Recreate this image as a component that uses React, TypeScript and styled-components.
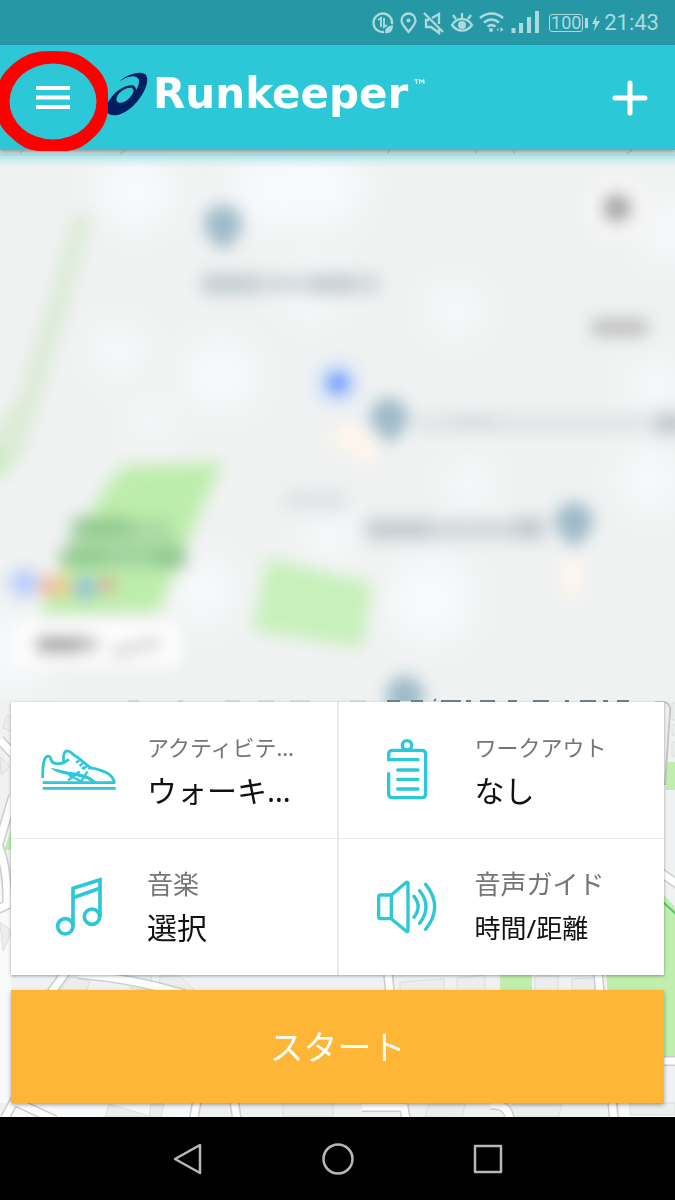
import React from "react";
import styled, { createGlobalStyle } from "styled-components";

const teal = "#2dc8d7";

const GlobalStyle = createGlobalStyle`
  *, *::before, *::after { box-sizing: border-box; }
  body {
    margin: 0;
    background: #000;
    font-family: "Noto Sans", "Noto Sans CJK JP", sans-serif;
  }
  button {
    margin: 0;
    padding: 0;
    border: 0;
    background: none;
    font: inherit;
    color: inherit;
    cursor: pointer;
  }
  svg { display: block; }
`;

const Screen = styled.div`
  display: flex;
  flex-direction: column;
  min-height: 100vh;
  overflow: hidden;
`;

const StatusBar = styled.div`
  display: flex;
  align-items: center;
  justify-content: flex-end;
  gap: 4px;
  height: 45px;
  padding-right: 16px;
  background: #2698a5;
  color: #abdade;
  font-family: Roboto, sans-serif;
`;

const Battery = styled.span`
  display: flex;
  align-items: center;
  justify-content: center;
  width: 34px;
  height: 18px;
  margin-left: 6px;
  border: 1px solid currentColor;
  border-radius: 3px;
  font-size: 18px;
  line-height: 18px;
`;

const BatteryTip = styled.span`
  width: 3px;
  height: 10px;
  margin-left: -2px;
  background: currentColor;
`;

const Clock = styled.time`
  font-size: 22px;
  line-height: 28px;
`;

const AppBar = styled.header`
  position: relative;
  z-index: 2;
  display: flex;
  align-items: center;
  height: 105px;
  padding: 0 27px 0 35px;
  background: ${teal};
  box-shadow: 0 2px 4px rgba(0, 0, 0, 0.3);
  color: #fff;
`;

const Brand = styled.h1`
  display: flex;
  flex: 1;
  align-items: center;
  gap: 4px;
  margin: 0 0 8px 36px;
  font-family: "DejaVu Sans", sans-serif;
  font-size: 42px;
  line-height: 48px;
  font-weight: 700;
`;

const Trademark = styled.span`
  align-self: flex-start;
  padding-top: 4px;
  font-size: 16px;
  line-height: 24px;
  font-weight: 400;
`;

const Highlight = styled.svg`
  position: absolute;
  left: -4px;
  top: 5px;
`;

const Stage = styled.main`
  position: relative;
  display: flex;
  flex: 1;
  flex-direction: column;
  justify-content: flex-end;
  gap: 15px;
  padding: 0 11px 14px;
  background: #f1f2f3;
`;

const MapCanvas = styled.svg`
  position: absolute;
  inset: 0;
  width: 100%;
  height: 100%;
`;

const Options = styled.section`
  position: relative;
  display: grid;
  grid-template-columns: 1fr 1fr;
  grid-auto-rows: 136px;
  gap: 1px 2px;
  background: #e9e9e9;
  box-shadow: 0 1px 3px rgba(0, 0, 0, 0.35);
`;

const Option = styled.button`
  display: grid;
  grid-template-columns: 136px 1fr;
  align-items: center;
  background: #fff;
  text-align: left;
`;

const OptionIcon = styled.span`
  display: flex;
  justify-content: center;
  color: ${teal};
`;

const OptionText = styled.span`
  display: flex;
  flex-direction: column;
  gap: 6px;
  padding-top: 4px;
  white-space: nowrap;
`;

const Label = styled.span<{ $large?: boolean }>`
  font-size: ${(p) => (p.$large ? 26 : 22)}px;
  line-height: 32px;
  color: #757575;
`;

const Value = styled.span<{ $small?: boolean }>`
  font-size: ${(p) => (p.$small ? 26 : 30)}px;
  line-height: 44px;
  color: #111;
`;

const StartButton = styled.button`
  position: relative;
  height: 113px;
  background: #ffb536;
  box-shadow: 0 2px 4px rgba(0, 0, 0, 0.35);
  color: #fff;
  font-size: 34px;
  line-height: 48px;
`;

const NavBar = styled.nav`
  display: flex;
  align-items: center;
  justify-content: center;
  gap: 100px;
  height: 83px;
  background: #000;
`;

const NavButton = styled.button`
  display: flex;
  align-items: center;
  justify-content: center;
  width: 50px;
  height: 50px;
`;

const StatusIcons = () => (
  <svg width="168" height="28" viewBox="371 9 168 28" fill="none" stroke="currentColor" strokeWidth="2.300" aria-hidden="true">
    <path d="M384 32A9.300 9.300 0 1 1 392 24" />
    <path d="M378 20l3-2v9M384 18v9l3-2" strokeWidth="1.900" />
    <path d="M385 33c0-5 3-7 8-8 0 6-3 9-8 8z" fill="currentColor" stroke="none" />
    <path d="M408.500 32c-4-5-7-8-7-11.500a7 7 0 0 1 14 0c0 3.500-3 6.500-7 11.500z" />
    <circle cx="408.500" cy="20.500" r="2" fill="currentColor" stroke="none" />
    <path d="M424 13l19 19M429 20h-3v7h5l8 6v-5M432 18l7-4v10" />
    <path d="M452 25c5-8 15-8 20 0-5 7.500-15 7.500-20 0zM462 13v5M453 15l3 4M471 15l-3 4" />
    <circle cx="462" cy="25" r="4" fill="currentColor" stroke="none" />
    <path d="M480 18c7-6 16-6 23 0M484 22.500c5-4 10-4 15 0M487.500 26.500c3-2 5-2 8 0" strokeWidth="2.600" />
    <circle cx="491" cy="30" r="2" fill="currentColor" stroke="none" />
    <path d="M500.500 27v5l3-2.500zM498.500 28v3l-2-1.500z" fill="currentColor" stroke="none" />
    <path d="M513.500 33v-5M521 33v-10M529 33v-16M537 33v-22" strokeWidth="4" />
  </svg>
);

const BoltIcon = () => (
  <svg width="8" height="18" viewBox="0 0 8 18" fill="currentColor" aria-hidden="true">
    <path d="M5 1L0 10h3l-1 7 6-10H4z" />
  </svg>
);

const MenuIcon = () => (
  <svg width="35" height="24" viewBox="0 0 35 24" fill="#fff" aria-hidden="true">
    <path d="M1 0h34v4H1zM1 9.500h34v4H1zM1 19h34v4H1z" />
  </svg>
);

const SpiralMark = () => (
  <svg width="43" height="44" viewBox="315 76 129 132" fill="#001e62" aria-hidden="true">
    <path
      fillRule="evenodd"
      d="M355 105C376 83 418 71 433 83C447 98 434 134 408 165C382 196 346 213 325 203C308 193 318 165 337 145C358 122 390 109 402 120C404 123 405 127 405 131C416 112 418 97 406 91C392 85 372 93 355 105ZM347 162C352 173 371 169 386 153C401 138 401 124 389 123C370 122 342 145 347 162Z"
    />
  </svg>
);

const PlusIcon = () => (
  <svg width="36" height="36" viewBox="0 0 36 36" stroke="#fff" strokeWidth="5" strokeLinecap="round" aria-hidden="true">
    <path d="M18 3v30M3 18h30" />
  </svg>
);

const ShoeIcon = () => (
  <svg width="78" height="44" viewBox="121 150 234 132" fill="none" stroke="currentColor" strokeWidth="8.500" aria-hidden="true">
    <path d="M129 240C129 210 130 184 141 176C148 172 153 177 154 185C158 200 178 199 192 194L208 184M192 194C190 176 191 161 201 159C212 157 217 169 232 177L271 208C302 218 337 221 344 253" />
    <path d="M129 254H347M129 271H348" />
    <path d="M153 209L207 221C235 225 270 228 290 252L276 253C257 237 230 235 207 231C184 226 162 221 153 209Z" fill="currentColor" stroke="none" />
    <path d="M205 247L240 220M247 213L255 207M246 248L263 221M267 214L273 207M207 231L248 252" strokeWidth="7" />
    <path d="M229 194L239 187M240 205L249 195M252 213L262 204" strokeWidth="7" />
  </svg>
);

const ClipboardIcon = () => (
  <svg width="44" height="62" viewBox="141 132 132 186" fill="none" stroke="currentColor" strokeWidth="10" strokeLinecap="round" aria-hidden="true">
    <path d="M240 194H152V178Q152 166 164 166H251Q263 166 263 178V296Q263 308 251 308H164Q152 308 152 296V236" />
    <circle cx="207" cy="151" r="14" />
    <path d="M179 225H240M179 253H240M179 282H240" />
  </svg>
);

const MusicIcon = () => (
  <svg width="48" height="60" viewBox="165 123 144 180" fill="none" stroke="currentColor" strokeWidth="11" aria-hidden="true">
    <circle cx="196" cy="271" r="23" />
    <circle cx="276" cy="242" r="23" />
    <path d="M219 271V157L300 131V242" />
    <path d="M219 185L300 157" />
  </svg>
);

const SpeakerIcon = () => (
  <svg width="62" height="56" viewBox="113 132 186 168" fill="none" stroke="currentColor" strokeWidth="10" strokeLinecap="round" strokeLinejoin="round" aria-hidden="true">
    <path d="M159 180H127Q121 180 121 186V245Q121 251 127 251H159ZM159 180L204 142Q209 140 209 146V286Q209 292 204 289L159 251" />
    <path d="M227 184Q252 214 227 247M244 167Q282 215 244 265M262 148Q316 215 262 283" />
  </svg>
);

const pins = [
  [223, 224],
  [389, 417],
  [574, 521],
  [405, 695],
];

const paleBlocks = [
  [135, 190, 36], [270, 190, 36], [320, 185, 40], [118, 350, 22], [220, 375, 32], [310, 290, 24],
  [455, 310, 22], [670, 230, 26], [655, 385, 22], [470, 485, 20], [430, 600, 40],
  [200, 590, 30], [15, 650, 34], [650, 480, 28], [330, 540, 22], [150, 420, 16],
];

const MapArtwork = () => (
  <MapCanvas viewBox="0 150 675 967" preserveAspectRatio="xMidYMax slice" aria-hidden="true">
    <defs>
      <filter id="soft" x="-10%" y="-10%" width="120%" height="120%">
        <feGaussianBlur stdDeviation="8" />
      </filter>
      <filter id="softer" x="-10%" y="-10%" width="120%" height="120%">
        <feGaussianBlur stdDeviation="18" />
      </filter>
      <clipPath id="window">
        <rect x="-200" y="154" width="1075" height="547" />
      </clipPath>
      <linearGradient id="tint" x1="0" y1="0" x2="0" y2="1">
        <stop offset="0" stopColor="#9edfe5" />
        <stop offset="1" stopColor="#c8eff3" stopOpacity="0" />
      </linearGradient>
    </defs>

    <rect x="-200" y="150" width="1075" height="967" fill="#f0f1f2" />
    <rect x="-200" y="150" width="1075" height="5" fill="#d8dcdc" />
    <path d="M0 880V1117H11V900zM0 1103H200V1117H0zM620 1103H675V1117H620z" fill="#f8f9fb" />
    <path d="M666 762h9v28h-9zM500 975h32v16h-32zM606 975h58v-80l11 12v150h-60zM4 850l7-20v20z" fill="#c0eeac" />
    <g fill="#eceeee" stroke="#dcdede">
      <path d="M3 728l4-13 6 3v14zM0 757l10 10-9 8zM0 922l12 9-9 20zM60 990l10-13 20 4-3 9zM130 974h22l-2 17-20-3zM160 976h20l14 14h-35zM400 982l44-3v12h-44zM457 978l28-3v16h-28zM535 976h23v15h-23zM572 979l23-1v12h-23z" />
      <path d="M105 1117l4-13 44 13zM151 1104h13l-3 14h-12zM283 1103h50v14h-50zM425 1117l4-13h36l-3 14zM512 1105h50l-4 12h-50zM630 1103h45v12h-45zM672 703h6v17h-6zM672 725h6v10h-6zM672 742h6v14h-6z" />
    </g>
    <g fill="none" stroke="#cbcdce" strokeWidth="10">
      <path d="M0 740L13 754M-3 850L13 796M-4 840Q8 865 7 905L-4 910M50 994L66 972M78 974Q130 978 185 994M388 972L390 994M598 972L600 994M660 872L680 886M660 1061H680" />
      <path d="M5 1118L14 1101L55 1120M194 1118L197 1100M234 1100L237 1120M362 1107H404L406 1120M490 1105Q508 1103 510 1120M612 1100L614 1120" />
    </g>
    <g fill="none" stroke="#fff" strokeWidth="7">
      <path d="M0 740L13 754M-3 850L13 796M-4 840Q8 865 7 905L-4 910M50 994L66 972M78 974Q130 978 185 994M388 972L390 994M598 972L600 994M660 872L680 886M660 1061H680" />
      <path d="M5 1118L14 1101L55 1120M194 1118L197 1100M234 1100L237 1120M362 1107H404L406 1120M490 1105Q508 1103 510 1120M612 1100L614 1120" />
    </g>
    <path d="M655 702H664Q671 703 670 712L665 785" stroke="#c4c6c7" strokeWidth="2" fill="none" />
    <path d="M662 901L677 915" stroke="#5bc076" strokeWidth="2" />
    <path d="M19 155l4-5M120 154l6-4M387 155l3-6M477 155l-2-6M515 155l-2-6M625 155l7-5" stroke="#b4b6b6" />

    <g clipPath="url(#window)">
      <rect x="-200" y="154" width="1075" height="547" fill="#f0f2f2" />
      <g filter="url(#softer)" fill="#f9fafd">
        {paleBlocks.map(([x, y, r]) => (
          <circle key={`${x}-${y}`} cx={x} cy={y} r={r} />
        ))}
      </g>
      <g filter="url(#soft)">
        <path d="M74 215H92L65 315L24 450L8 473L-20 480V450L20 395L52 290z" fill="#dbead5" />
        <path d="M-20 450H8L3 475L-20 482z" fill="#c8efbb" />
        <path d="M124 466L222 463L205 500L158 612L40 614L56 580L82 530L105 488z" fill="#bdedab" />
        <path d="M268 558L372 584L362 648L253 630z" fill="#c7f0ba" />
        <path d="M72 517H130V537H72z" fill="#86bf8a" opacity=".8" />
        <path d="M130 520H170V536H130z" fill="#8fc497" opacity=".5" />
        <path d="M66 538H184V550H66z" fill="#9dcb9f" opacity=".6" />
        <path d="M60 550H105V566H60zM155 550H186V568H155z" fill="#7ebb83" opacity=".8" />
        <path d="M105 550H155V567H105z" fill="#8fc497" opacity=".7" />
        <g fill="#bcc5cb">
          <path d="M202 274H254V294H202zM310 274H352V294H310zM366 519H430V540H366zM515 517H545V540H515z" opacity=".85" />
          <path d="M254 275H310V293H254zM352 275H380V293H352zM430 520H515V539H430z" opacity=".6" />
          <path d="M415 415H650V431H415z" opacity=".35" />
          <path d="M455 413H495V430H455z" opacity=".2" />
          <path d="M654 413H690V434H654z" opacity=".9" />
          <path d="M286 492H346V510H286z" opacity=".35" />
        </g>
        <path d="M592 319H647V336H592z" fill="#bdbdbe" />
        <path d="M30 635H168V652H30z" fill="#fff" stroke="#fff" strokeWidth="24" />
        <path d="M36 636H80V653H36z" fill="#9c9c9c" />
        <path d="M80 637H98V651H80z" fill="#b4b4b4" />
        <path d="M110 646L162 636V648L112 658z" fill="#d6d6d6" />
        <path d="M345 420L380 445L368 464L330 440zM563 560h18v35h-18z" fill="#fff6ec" />
        <circle cx="617" cy="208" r="32" fill="#f6f6f6" />
        <circle cx="617" cy="208" r="15" fill="#a6a6a6" />
        <circle cx="337" cy="383" r="26" fill="#e0ebf6" />
        <circle cx="338" cy="383" r="13" fill="#639bfa" />
        {pins.map(([x, y]) => (
          <path key={`${x}-${y}`} d={`M${x} ${y + 27}l-14-14a19 19 0 1 1 28 0z`} fill="#9dbac8" />
        ))}
        <circle cx="24" cy="583" r="14" fill="#b4cdfa" />
        <circle cx="48" cy="586" r="10" fill="#f2b19b" />
        <circle cx="64" cy="586" r="10" fill="#eacc82" />
        <circle cx="85" cy="588" r="11" fill="#89bdda" />
        <circle cx="107" cy="585" r="9" fill="#d5ad91" />
      </g>
      <rect x="-200" y="154" width="1075" height="14" fill="url(#tint)" />
    </g>
    <path d="M128 701h11M178 701h5M225 701h15M258 701h16M290 701h20M350 701h16" stroke="#c4c8ca" />
    <path d="M387 701h13M411 701h12M434 701l2-2M441 701h20M466 701h5M480 701h15M508 701h9M533 701h16M565 701h4M580 701h16M603 701h5M617 701h12" stroke="#6a8794" strokeWidth="2" />
  </MapCanvas>
);

const options = [
  { label: "アクティビテ…", value: "ウォーキ…", icon: <ShoeIcon /> },
  { label: "ワークアウト", value: "なし", icon: <ClipboardIcon /> },
  { label: "音楽", value: "選択", icon: <MusicIcon />, largeLabel: true },
  { label: "音声ガイド", value: "時間/距離", icon: <SpeakerIcon />, largeLabel: true, smallValue: true },
];

export default function App() {
  return (
    <Screen>
      <GlobalStyle />
      <StatusBar>
        <StatusIcons />
        <Battery>100</Battery>
        <BatteryTip />
        <BoltIcon />
        <Clock>21:43</Clock>
      </StatusBar>
      <AppBar>
        <button aria-label="メニュー">
          <MenuIcon />
        </button>
        <Brand>
          <SpiralMark />
          <span>Runkeeper</span>
          <Trademark>™</Trademark>
        </Brand>
        <button aria-label="追加">
          <PlusIcon />
        </button>
        <Highlight width="114" height="104" viewBox="-4 50 114 104" fill="#f00" aria-hidden="true">
          <path
            fillRule="evenodd"
            d="M40 51.500Q53 50.500 66 51.500C77 53 86 58 93 65C103 73 108 83 108 94V110C107 121 102 130 93 138C85 146 77 150 67 151H38C28 150 20 146 12 138C2 130 -3 121 -4 110V94C-3 83 2 74 12 65C20 58 29 53 40 51.500ZM9.500 101.500A43.500 38 0 1 0 96.500 101.500A43.500 38 0 1 0 9.500 101.500Z"
          />
        </Highlight>
      </AppBar>
      <Stage>
        <MapArtwork />
        <Options>
          {options.map((o) => (
            <Option key={o.label}>
              <OptionIcon>{o.icon}</OptionIcon>
              <OptionText>
                <Label $large={o.largeLabel}>{o.label}</Label>
                <Value $small={o.smallValue}>{o.value}</Value>
              </OptionText>
            </Option>
          ))}
        </Options>
        <StartButton>スタート</StartButton>
      </Stage>
      <NavBar>
        <NavButton aria-label="戻る">
          <svg width="32" height="32" viewBox="0 0 32 32" fill="none" stroke="#b8b8b8" strokeWidth="2.500" strokeLinejoin="round">
            <path d="M28 2V30L3 16z" />
          </svg>
        </NavButton>
        <NavButton aria-label="ホーム">
          <svg width="32" height="32" viewBox="0 0 32 32" fill="none" stroke="#b8b8b8" strokeWidth="2.500">
            <circle cx="16" cy="16" r="14.500" />
          </svg>
        </NavButton>
        <NavButton aria-label="最近使ったアプリ">
          <svg width="32" height="32" viewBox="0 0 32 32" fill="none" stroke="#b8b8b8" strokeWidth="2.500" strokeLinejoin="round">
            <path d="M3 3H29V29H3z" />
          </svg>
        </NavButton>
      </NavBar>
    </Screen>
  );
}
